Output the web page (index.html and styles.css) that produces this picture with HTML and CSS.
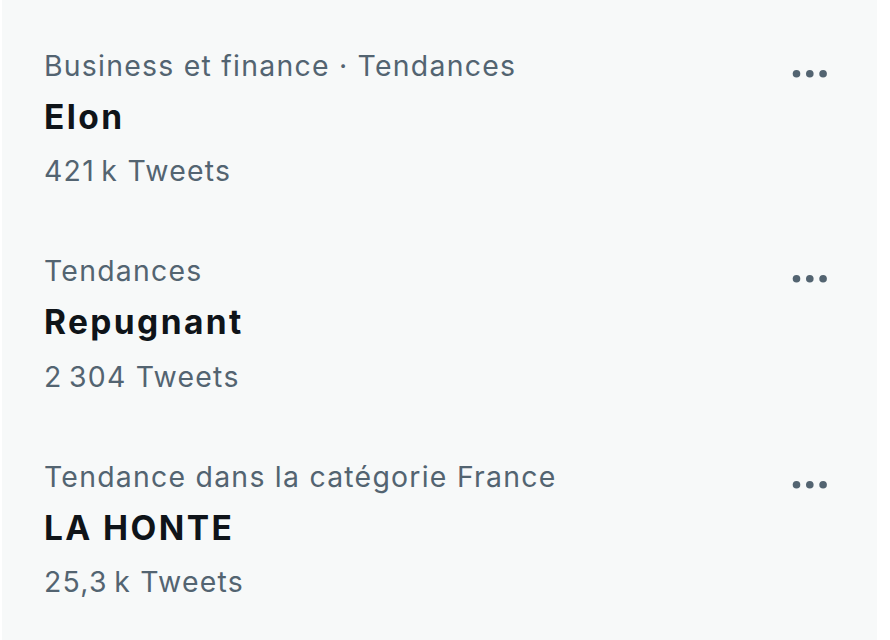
FILE: index.html
```html
<!DOCTYPE html>
<html lang="fr">
<head>
<meta charset="utf-8">
<title>Tendances</title>
<link rel="stylesheet" href="styles.css">
</head>
<body>
<div class="panel">
  <div class="trend">
    <div class="info">
      <div class="meta">Business et finance · Tendances</div>
      <div class="name">Elon</div>
      <div class="count">421&#8239;k Tweets</div>
    </div>
    <svg class="more" viewBox="0 0 24 24" aria-hidden="true"><circle cx="5" cy="12" r="2"/><circle cx="12" cy="12" r="2"/><circle cx="19" cy="12" r="2"/></svg>
  </div>
  <div class="trend">
    <div class="info">
      <div class="meta">Tendances</div>
      <div class="name">Repugnant</div>
      <div class="count">2&#8239;304 Tweets</div>
    </div>
    <svg class="more" viewBox="0 0 24 24" aria-hidden="true"><circle cx="5" cy="12" r="2"/><circle cx="12" cy="12" r="2"/><circle cx="19" cy="12" r="2"/></svg>
  </div>
  <div class="trend">
    <div class="info">
      <div class="meta">Tendance dans la catégorie France</div>
      <div class="name">LA HONTE</div>
      <div class="count">25,3&#8239;k Tweets</div>
    </div>
    <svg class="more" viewBox="0 0 24 24" aria-hidden="true"><circle cx="5" cy="12" r="2"/><circle cx="12" cy="12" r="2"/><circle cx="19" cy="12" r="2"/></svg>
  </div>
</div>
</body>
</html>
```
FILE: styles.css
```css
html, body {
  margin: 0;
  padding: 0;
  background: #ffffff;
}
body {
  font-family: Inter, "Noto Sans", "Liberation Sans", sans-serif;
}
.panel {
  margin-left: 2px;
  width: 875px;
  height: 640px;
  background: #f7f9f9;
  padding-top: 16px;
  box-sizing: border-box;
}
.trend {
  display: flex;
  align-items: flex-start;
  padding: 32px 44px 33px 42px;
}
.info {
  flex: 1;
  display: flex;
  flex-direction: column;
}
.meta, .count {
  font-size: 28.4px;
  line-height: 35px;
  letter-spacing: 1.25px;
  color: #536471;
}
.name {
  font-size: 33.5px;
  line-height: 43.4px;
  font-weight: 700;
  letter-spacing: 2.4px;
  color: #0f1419;
  margin-top: 13px;
}
.count {
  margin-top: 14px;
}
.more {
  width: 45.6px;
  height: 45.6px;
  margin-top: 3px;
  fill: #536471;
}
```
